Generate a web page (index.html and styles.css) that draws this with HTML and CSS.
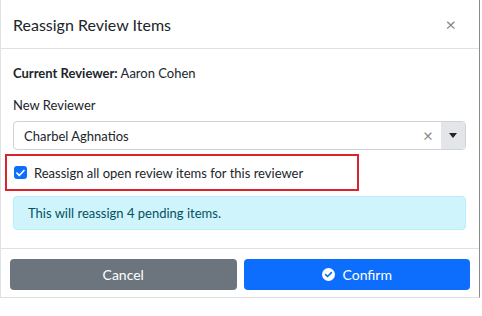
FILE: index.html
```html
<!DOCTYPE html>
<html lang="en">
  <head>
    <meta charset="UTF-8" />
    <meta name="viewport" content="width=device-width, initial-scale=1.0" />
    <title>Reassign Review Items</title>
    <link rel="stylesheet" href="styles.css">
  </head>
  <body>
    <div class="modal">
      <!-- Header -->
      <div class="modal-header">
        <h2>Reassign Review Items</h2>
        <span class="close">&times;</span>
      </div>

      <!-- Body -->
      <div class="modal-body">
        <p class="current"><strong>Current Reviewer:</strong> Aaron Cohen</p>

        <label class="field-label">New Reviewer</label>
        <div class="select">
          <span class="select-value">Charbel Aghnatios</span>
          <span class="select-clear">&times;</span>
          <span class="select-arrow">
            <svg width="8" height="5" viewBox="0 0 8 5"><path d="M0 0h8L4 5z" fill="#222"/></svg>
          </span>
        </div>

        <div class="check-row">
          <span class="checkbox">
            <svg width="9" height="8" viewBox="0 0 9 8"><path d="M1 4.2l2.3 2.3L8 1.5" fill="none" stroke="#fff" stroke-width="1.7" stroke-linecap="round" stroke-linejoin="round"/></svg>
          </span>
          <span>Reassign all open review items for this reviewer</span>
        </div>

        <div class="alert">This will reassign 4 pending items.</div>
      </div>

      <!-- Footer -->
      <div class="modal-footer">
        <button class="btn btn-cancel">Cancel</button>
        <button class="btn btn-confirm">
          <svg width="13" height="13" viewBox="0 0 16 16"><circle cx="8" cy="8" r="8" fill="#fff"/><path d="M4.5 8.2l2.3 2.3 4.7-4.8" fill="none" stroke="#0d6efd" stroke-width="2" stroke-linecap="round" stroke-linejoin="round"/></svg>
          Confirm
        </button>
      </div>
    </div>
  </body>
</html>
```

FILE: styles.css
```css
/* Global Styles */
body {
  margin: 0;
  padding: 0;
  font-family: Lato, "Noto Sans", Arial, sans-serif;
  background-color: #ffffff;
  color: #212529;
}

/* Modal */
.modal {
  width: 478px;
  height: 297px;
  border: 1px solid #dee2e6;
  border-right-color: #8a8a8a;
  border-top: none;
  background-color: #ffffff;
}

.modal-header {
  display: flex;
  align-items: center;
  justify-content: space-between;
  height: 48px;
  padding: 0 23px 0 12px;
  border-bottom: 1px solid #dee2e6;
}

.modal-header h2 {
  margin: 0;
  font-size: 16px;
  font-weight: 400;
  color: #212529;
}

.close {
  font-size: 18px;
  color: #888;
}

.modal-body {
  padding: 15px 12px 0 12px;
  height: 200px;
  box-sizing: border-box;
  border-bottom: 1px solid #dee2e6;
}

.current {
  margin: 0 0 14px 0;
  font-size: 13px;
  line-height: 18px;
}

.current strong {
  font-weight: 700;
}

.field-label {
  display: block;
  font-size: 13px;
  line-height: 18px;
  margin-bottom: 7px;
}

/* Select */
.select {
  display: flex;
  align-items: center;
  height: 29px;
  width: 453px;
  border: 1px solid #ced4da;
  border-radius: 4px;
  box-sizing: border-box;
  overflow: hidden;
}

.select-value {
  flex: 1;
  padding-left: 10px;
  font-size: 13px;
}

.select-clear {
  width: 26px;
  text-align: center;
  font-size: 17px;
  color: #888;
}

.select-arrow {
  display: flex;
  align-items: center;
  justify-content: center;
  width: 24px;
  height: 100%;
  background-color: #e3e5e8;
}

/* Checkbox row */
.check-row {
  display: flex;
  align-items: center;
  gap: 7px;
  width: 354px;
  height: 37px;
  margin: 4px 0 0 -8px;
  padding-left: 7px;
  border: 2px solid #d9232e;
  font-size: 13px;
  box-sizing: border-box;
}

.checkbox {
  display: flex;
  align-items: center;
  justify-content: center;
  width: 13px;
  height: 13px;
  border-radius: 3px;
  background-color: #0d6efd;
}

/* Alert */
.alert {
  width: 453px;
  height: 34px;
  margin-top: 5px;
  padding-left: 14px;
  display: flex;
  align-items: center;
  box-sizing: border-box;
  background-color: #cff4fc;
  border: 1px solid #b6effb;
  border-radius: 4px;
  color: #055160;
  font-size: 13px;
}

/* Footer */
.modal-footer {
  display: flex;
  gap: 7px;
  padding: 10px 9px 0 9px;
}

.btn {
  flex: 1;
  height: 31px;
  border: none;
  border-radius: 4px;
  color: #ffffff;
  font-family: inherit;
  font-size: 14px;
  display: flex;
  align-items: center;
  justify-content: center;
  gap: 8px;
}

.btn-cancel {
  background-color: #6c757d;
}

.btn-confirm {
  background-color: #0d6efd;
}
```
